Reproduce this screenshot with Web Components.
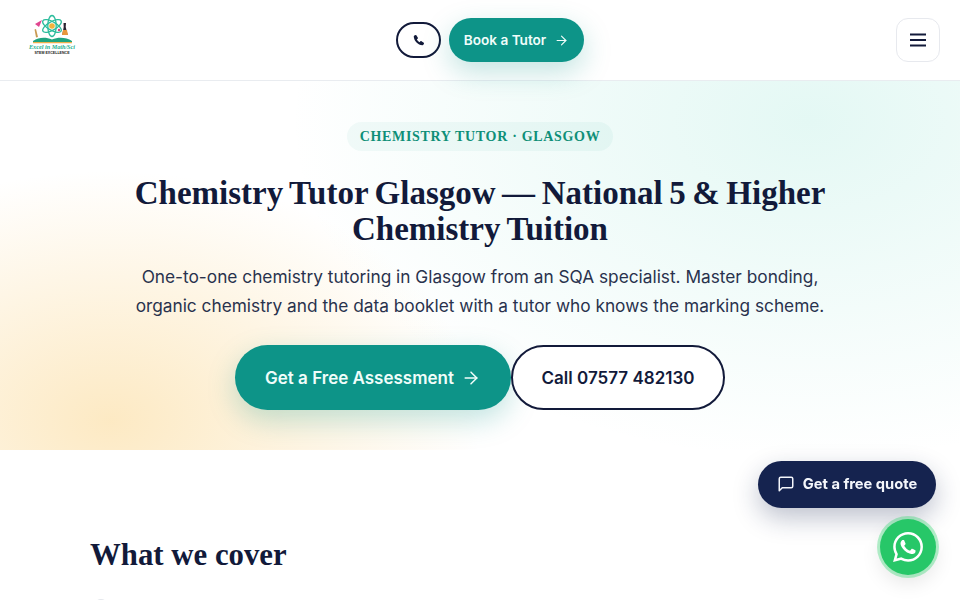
<!doctype html>
<html lang="en"><head><meta charset="utf-8"><title>Chemistry Tutor Glasgow</title>
<style>
html,body{margin:0;padding:0;background:#fff;height:600px;overflow:hidden;font-family:Inter,"Liberation Sans",sans-serif;color:#121a3a}
</style></head><body>
<site-header></site-header>
<hero-section>
  <span slot="chip">CHEMISTRY TUTOR · GLASGOW</span>
  <span slot="title">Chemistry Tutor Glasgow — National 5 &amp; Higher Chemistry Tuition</span>
  <span slot="lead">One-to-one chemistry tutoring in Glasgow from an SQA specialist. Master bonding, organic chemistry and the data booklet with a tutor who knows the marking scheme.</span>
</hero-section>
<cover-section></cover-section>
<float-actions></float-actions>
<script>
function def(name, html){
  customElements.define(name, class extends HTMLElement{
    constructor(){super();this.attachShadow({mode:'open'}).innerHTML=html;}
  });
}
const arrow=(s)=>`<svg width="${s}" height="${s}" viewBox="0 0 24 24" fill="none" stroke="currentColor" stroke-width="1.800" stroke-linecap="round" stroke-linejoin="round"><path d="M5 12h14"/><path d="m12 5 7 7-7 7"/></svg>`;
def('site-logo',`<style>
:host{display:block;width:64px;height:64px}
.w{position:relative;width:64px;height:64px}
svg{display:block;position:absolute;left:0;top:0}
.a,.b{position:absolute;left:0;width:64px;text-align:center;white-space:nowrap}
.a{top:35px;font:italic bold 6.2px/7px "Liberation Serif",serif;color:#22b08f}
.b{top:43px;font:bold 3.6px/5px "Liberation Sans",sans-serif;color:#222}
</style><div class="w"><svg width="64" height="64" viewBox="0 0 64 64" fill="none">
<g stroke="#2cbc9c" stroke-width="1.300"><ellipse cx="32" cy="18" rx="4.200" ry="10.500"/><ellipse cx="32" cy="18" rx="4.200" ry="10.500" transform="rotate(60 32 18)"/><ellipse cx="32" cy="18" rx="4.200" ry="10.500" transform="rotate(-60 32 18)"/></g>
<circle cx="32" cy="18" r="2.800" fill="#f2b33d"/>
<path d="M15 16l7-4-3 7z" fill="#e0458f"/><path d="M16 21l2 8-2 .5-1.500-8z" fill="#c99a52"/>
<path d="M43.500 15h2.500l-.3 4 2 8h-5.500l1.500-8z" fill="#2a2230"/><path d="M43 22h4l1 5h-6z" fill="#e8973a"/><circle cx="39" cy="22" r="1.200" fill="#d8417b"/>
<path d="M13 33c6-4 13-4 19-1.500 6-2.500 14-2.500 20 1.500v1H13z" fill="#1fa47f"/><path d="M13 34h39v1.200H13z" fill="#eeb04d"/>
</svg><div class="a">Excel in Math/Sci</div><div class="b">STEM EXCELLENCE</div></div>`);
def('pill-button',`<style>
:host{display:inline-flex;align-items:center;justify-content:center;box-sizing:border-box;border-radius:999px;font-weight:600;white-space:nowrap;height:var(--h,44px);width:var(--w,auto);font-size:var(--fs,14px);gap:var(--gap,10px)}
:host([variant=primary]){background:#0d9488;color:#f0fdfa;box-shadow:0 10px 28px rgba(13,148,136,.25)}
:host([variant=outline]){border:2px solid #121a3a;color:#121a3a;background:#fff}
::slotted(svg){flex:none}
</style><slot></slot>`);
def('site-header',`<style>
:host{display:flex;align-items:center;justify-content:space-between;box-sizing:border-box;height:81px;padding:0 20px;background:#fff;border-bottom:1px solid #e9ecf0;position:relative;z-index:2}
.mid{display:flex;align-items:center;gap:8px}
.menu{box-sizing:border-box;width:44px;height:44px;border:1px solid #e7e9ee;border-radius:12px;background:#fff;display:flex;align-items:center;justify-content:center;color:#121a3a}
.call{--w:45px;--h:36px}
.book{--w:135px;--h:44px;--gap:8px;--fs:13.6px}
</style>
<site-logo></site-logo>
<div class="mid">
<pill-button class="call" variant="outline"><svg width="12" height="12" viewBox="0 0 24 24" fill="currentColor"><path d="M6.600 2.500 9.800 7.600c.3.500.2 1.100-.2 1.500L7.700 11c1.200 2.400 3 4.200 5.300 5.300l1.900-1.900c.4-.4 1-.5 1.500-.2l5.100 3.200c.5.300.7.900.5 1.400l-1 2.400c-.4.900-1.300 1.400-2.300 1.300C9.900 21.600 2.400 14.100 1.500 5.300 1.400 4.300 1.900 3.400 2.800 3l2.400-1c.5-.2 1.100 0 1.400.5z"/></svg></pill-button>
<pill-button class="book" variant="primary"><span>Book a Tutor</span>${arrow(15)}</pill-button>
</div>
<div class="menu"><svg width="18" height="18" viewBox="0 0 18 18" fill="none" stroke="currentColor" stroke-width="2"><path d="M1 3.500h16M1 9h16M1 14.500h16"/></svg></div>`);
def('hero-section',`<style>
:host{display:flex;flex-direction:column;align-items:center;box-sizing:border-box;height:369px;padding-top:41px;text-align:center;
background:radial-gradient(520px 340px at 810px 40px,rgba(94,214,190,.17),rgba(94,214,190,0) 100%),radial-gradient(370px 250px at 110px 340px,rgba(250,208,125,.46),rgba(250,208,125,0) 100%),#fff}
.chip{box-sizing:border-box;height:29px;padding:0 13px;border-radius:999px;background:rgba(13,148,136,.05);display:flex;align-items:center;font:bold 14px/1 "Liberation Serif",serif;letter-spacing:.68px;color:#0f8f78}
h1{margin:24px 0 0;width:720px;font:bold 33px/36px "Liberation Serif",serif;word-spacing:-1.7px;color:#121a3a}
p{margin:15px 0 0;width:720px;font-size:17.28px;line-height:29px;color:#29324d}
.cta{display:flex;margin-top:25px}
.a{--w:276px;--h:65px;--fs:17px;--gap:7px}
.b{--w:214px;--h:65px;--fs:17px}
</style>
<div class="chip"><slot name="chip"></slot></div>
<h1><slot name="title"></slot></h1>
<p><slot name="lead"></slot></p>
<div class="cta">
<pill-button class="a" variant="primary"><span>Get a Free Assessment</span>${arrow(20)}</pill-button>
<pill-button class="b" variant="outline"><span>Call 07577 482130</span></pill-button>
</div>`);
def('cover-section',`<style>
:host{display:block;padding:87px 90px 0;background:#fff}
h2{margin:0;font:bold 30.8px/36px "Liberation Serif",serif;color:#121a3a}
.dot{margin:26px 0 0 4px;width:14px;height:14px;border-radius:50%;background:#e4e7ec}
</style><h2>What we cover</h2><div class="dot"></div>`);
def('float-actions',`<style>
:host{position:fixed;right:24px;bottom:25px;display:flex;flex-direction:column;align-items:flex-end;gap:11px;z-index:5}
.q{box-sizing:border-box;width:178px;height:47px;padding-bottom:1px;border-radius:999px;background:#15234f;color:#f4f6fb;display:flex;align-items:center;justify-content:center;gap:8px;font-size:14.7px;font-weight:700;box-shadow:0 10px 26px rgba(21,35,79,.28)}
.w{box-sizing:border-box;width:56px;height:56px;border-radius:50%;background:#27c768;box-shadow:0 0 0 3px rgba(37,211,102,.35),0 8px 20px rgba(0,0,0,.1);display:flex;align-items:center;justify-content:center}
</style>
<div class="q"><svg width="18" height="18" viewBox="0 0 24 24" fill="none" stroke="currentColor" stroke-width="2" stroke-linecap="round" stroke-linejoin="round"><path d="M21 15a2 2 0 0 1-2 2H7l-4 4V5a2 2 0 0 1 2-2h14a2 2 0 0 1 2 2z"/></svg><span>Get a free quote</span></div>
<div class="w"><svg width="30" height="30" viewBox="0 0 24 24" fill="#fff"><path d="M17.472 14.382c-.297-.149-1.758-.867-2.030-.967-.273-.099-.471-.148-.670.150-.197.297-.767.966-.940 1.164-.173.199-.347.223-.644.075-.297-.150-1.255-.463-2.390-1.475-.883-.788-1.480-1.761-1.653-2.059-.173-.297-.018-.458.130-.606.134-.133.298-.347.446-.520.149-.174.198-.298.298-.497.099-.198.050-.371-.025-.520-.075-.149-.669-1.612-.916-2.207-.242-.579-.487-.500-.669-.510-.173-.008-.371-.010-.570-.010-.198 0-.520.074-.792.372-.272.297-1.040 1.016-1.040 2.479 0 1.462 1.065 2.875 1.213 3.074.149.198 2.096 3.200 5.077 4.487.709.306 1.262.489 1.694.625.712.227 1.360.195 1.871.118.571-.085 1.758-.719 2.006-1.413.248-.694.248-1.289.173-1.413-.074-.124-.272-.198-.570-.347m-5.421 7.403h-.004a9.870 9.870 0 0 1-5.031-1.378l-.361-.214-3.741.982.998-3.648-.235-.374a9.860 9.860 0 0 1-1.510-5.260c.001-5.450 4.436-9.884 9.888-9.884 2.640 0 5.122 1.030 6.988 2.898a9.825 9.825 0 0 1 2.893 6.994c-.003 5.450-4.437 9.884-9.885 9.884m8.413-18.297A11.815 11.815 0 0 0 12.050 0C5.495 0 .160 5.335.157 11.892c0 2.096.547 4.142 1.588 5.945L.057 24l6.305-1.654a11.882 11.882 0 0 0 5.683 1.448h.005c6.554 0 11.890-5.335 11.893-11.893a11.821 11.821 0 0 0-3.480-8.413z"/></svg></div>`);
</script>
</body></html>
